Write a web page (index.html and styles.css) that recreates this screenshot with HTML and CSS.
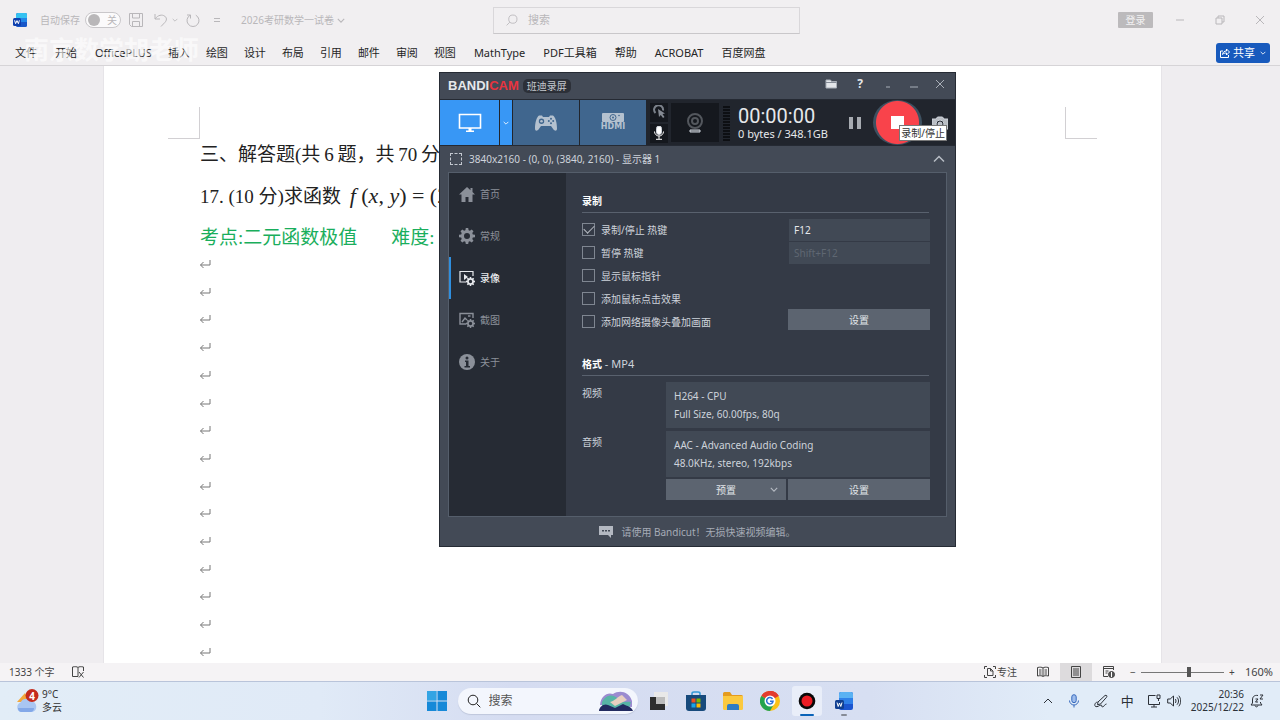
FILE: index.html
```html
<!DOCTYPE html>
<html lang="zh-CN">
<head>
<meta charset="utf-8">
<title>2026考研数学一试卷</title>
<link rel="stylesheet" href="styles.css">
</head>
<body>
<svg class="defs" aria-hidden="true">
  <symbol id="ret" viewBox="0 0 12 10"><path d="M11 1v5H1.500M4.500 3 1.500 6l3 3" fill="none" stroke="#777" stroke-width="1"/></symbol>
  <symbol id="gear" viewBox="0 0 16 16"><path fill="currentColor" fill-rule="evenodd" d="M6.800 0h2.400l.4 2.200 1.300.5L12.700 1.500l1.800 1.800-1.200 1.800.5 1.300 2.200.4v2.400l-2.200.4-.5 1.300 1.200 1.800-1.800 1.800-1.800-1.200-1.300.5L9.200 16H6.800l-.4-2.200-1.300-.5-1.800 1.200-1.800-1.800 1.200-1.800-.5-1.300L0 9.200V6.800l2.200-.4.5-1.300L1.500 3.300l1.800-1.800 1.800 1.200 1.300-.5zM8 5a3 3 0 1 0 0 6 3 3 0 0 0 0-6z"/></symbol>
  <symbol id="down" viewBox="0 0 10 6"><path d="M1 1l4 4 4-4" fill="none" stroke="currentColor" stroke-width="1.400"/></symbol>
  <symbol id="lens" viewBox="0 0 14 14"><circle cx="6" cy="6" r="4.800"/><path d="M9.500 9.500 13.300 13.300"/></symbol>
</svg>
<div class="screen">
  <header class="titlebar">
    <div class="title-left">
      <svg class="i14" viewBox="0 0 14 14"><rect x="3" width="11" height="14" rx="1.500" fill="#1857c8"/><path d="M4.500 0h8A1.500 1.500 0 0 1 14 1.500V5H3V1.500z" fill="#35c2f1"/><path d="M3 5h11v4H3z" fill="#2387e8"/><rect y="5" width="8" height="8" rx="1.500" fill="#0e3fae"/><path d="M1.600 7.300l1 3.400L4 7.600l1.400 3.100 1-3.400" fill="none" stroke="#fff"/></svg>
      <label class="autosave">自动保存<input type="checkbox" class="switch-input"><span class="switch"><span class="knob"></span>关</span></label>
      <button class="plain save" aria-label="保存"><svg class="i14" viewBox="0 0 14 14"><path d="M1 .5h12.500v13H2.500L.5 11.500V.500zM3.500.5v4.500h7V.5M3.500 13.500V8.500h7v5"/></svg></button>
      <button class="plain undo" aria-label="撤消"><svg class="i14" viewBox="0 0 14 14"><path d="M1 1v5h5M1.200 5.800C4 2 8 1.200 10.800 3.200c3 2.400 1.200 5.300-.5 6.800L7 13.500"/></svg><svg class="caret" viewBox="0 0 10 6"><use href="#down"/></svg></button>
      <button class="plain redo" aria-label="重复"><svg class="i14" viewBox="0 0 14 14"><path d="M4.200 2.200A6 6 0 1 0 9.800 2.200M1 2h3.500v3.500"/></svg></button>
      <button class="plain more" aria-label="自定义"><svg class="i8" viewBox="0 0 8 8"><path d="M1 2.500h6M1 5.500h6"/></svg></button>
      <span class="doc-name">2026考研数学一试卷</span><svg class="name-caret" viewBox="0 0 10 6"><use href="#down"/></svg>
    </div>
    <label class="search"><svg class="i12" viewBox="0 0 14 14"><g transform="matrix(-1 0 0 1 14 0)"><use href="#lens"/></g></svg><input type="text" placeholder="搜索"></label>
    <div class="title-right">
      <button class="login">登录</button>
      <button class="plain" aria-label="最小化"><svg class="i10" viewBox="0 0 10 10"><path d="M1 5h8"/></svg></button>
      <button class="plain" aria-label="还原"><svg class="i10" viewBox="0 0 10 10"><path d="M1 3h6v6H1zM3 3V1h6v6H7"/></svg></button>
      <button class="plain" aria-label="关闭"><svg class="i10" viewBox="0 0 10 10"><path d="M1 1l8 8M9 1 1 9"/></svg></button>
    </div>
  </header>
  <nav class="tabs">
    <button class="file">文件</button><button class="home">开始</button><button>OfficePLUS</button><button>插入</button><button>绘图</button><button>设计</button><button>布局</button><button>引用</button><button>邮件</button><button>审阅</button><button>视图</button>
    <div class="addins"><button>MathType</button><button>PDF工具箱</button><button>帮助</button><button>ACROBAT</button><button>百度网盘</button></div>
    <button class="share"><svg class="i10" viewBox="0 0 10 10"><path d="M3 3H.5v6.500h8V7M2.500 6.500c.3-2.500 2-3.500 4-3.500V1l3 3-3 3V5c-1.800 0-3 .3-4 1.500z"/></svg>共享<svg class="caret" viewBox="0 0 10 6"><use href="#down"/></svg></button>
    <div class="watermark">南京数学胡老师</div>
  </nav>

  <main class="canvas">
    <article class="page">
      <div class="corners"><span class="corner left"></span><span class="corner right"></span></div>
      <h2 class="line heading">三、解答题(共&thinsp;6&thinsp;题，共&thinsp;70&thinsp;分)</h2>
      <p class="line question">17. (10 分)求函数 <span class="math"><i>f</i> (<i>x</i>, <i>y</i>) = (2<i>x</i></span></p>
      <p class="line hint"><span>考点:二元函数极值</span><span>难度:</span></p>
      <div class="marks">
        <svg><use href="#ret"/></svg><svg><use href="#ret"/></svg><svg><use href="#ret"/></svg><svg><use href="#ret"/></svg><svg><use href="#ret"/></svg><svg><use href="#ret"/></svg><svg><use href="#ret"/></svg><svg><use href="#ret"/></svg><svg><use href="#ret"/></svg><svg><use href="#ret"/></svg><svg><use href="#ret"/></svg><svg><use href="#ret"/></svg><svg><use href="#ret"/></svg><svg><use href="#ret"/></svg><svg><use href="#ret"/></svg>
      </div>
    </article>
  </main>

  <footer class="status">
    <span>1333 个字</span>
    <button class="plain proof" aria-label="校对"><svg class="i12" viewBox="0 0 12 12"><path d="M6 10.500H.5V1C3 .5 5 .5 6 1.500 7 .5 9 .5 11.500 1v4M6 1.500v9M7 6l4.500 5.500M11.500 6 7 11.500"/></svg></button>
    <button class="plain focus"><svg class="i12" viewBox="0 0 12 12"><path d="M3 .5H.5V3M9 .5h2.500V3M3 11.500H.5V9M9 11.500h2.500V9M3.500 2.500h3l2.500 2.500v4.500H3.500zM6.500 2.500V5H9"/></svg>专注</button>
    <button class="plain view" aria-label="阅读视图"><svg class="i12" viewBox="0 0 12 12"><path d="M.5 1.500C3 1 5 1 6 2c1-1 3-1 5.500-.5V10C9 9.500 7 9.500 6 10.500 5 9.500 3 9.500.500 10zM6 2v8.500M2 4h2.500M2 6h2.500M2 8h2.500M7.500 4H10M7.500 6H10M7.500 8H10"/></svg></button>
    <button class="plain view active" aria-label="页面视图"><svg class="i12" viewBox="0 0 12 12"><path d="M1.500.5h9v11h-9zM3 3h6M3 5h6M3 7h6M3 9h6"/></svg></button>
    <button class="plain view" aria-label="Web 版式"><svg class="i12" viewBox="0 0 12 12"><path d="M5 10.500H.5V.500h10V4M.5 2.500h10M2.500 5h3M2.500 7h2"/><circle cx="8.500" cy="8.500" r="3" fill="#555"/><path d="M8.500 6v5" stroke="#fff"/></svg></button>
    <button class="plain zoom-out" aria-label="缩小">−</button>
    <input class="zoom" type="range" min="10" max="270" value="160" aria-label="缩放">
    <button class="plain zoom-in" aria-label="放大">+</button>
    <span class="percent">160%</span>
  </footer>

  <div class="taskbar">
    <div class="weather">
      <svg viewBox="0 0 24 26"><path d="M2 14 10 5l5 9z" fill="#f3a83b"/><path d="M6 24a5 5 0 0 1-.5-9.500 6 6 0 0 1 10.500-1A5.300 5.300 0 0 1 17 24z" fill="#a9c6f2"/><path d="M4 20h15a4 4 0 0 1-3 4H6a4 4 0 0 1-3-4z" fill="#83a8e8"/><circle cx="17" cy="7.500" r="6.500" fill="#c42b1c"/><text x="17" y="11.500" text-anchor="middle" class="badge-num">4</text></svg>
      <div>9°C<br>多云</div>
    </div>
    <div class="dock">
      <button class="plain" aria-label="开始"><svg class="i20" viewBox="0 0 20 20"><path fill="#1689d8" d="M0 0h9.500v9.500H0zM10.500 0H20v9.500h-9.500zM0 10.500h9.500V20H0zM10.500 10.500H20V20h-9.500z"/><path fill="#4fc0f0" opacity=".5" d="M0 0h9.500v9.500H0z"/></svg></button>
      <label class="task-search"><svg class="i14" viewBox="0 0 14 14"><use href="#lens"/></svg><input type="text" placeholder="搜索">
        <svg class="scene" viewBox="0 0 36 20"><path d="M2 14C3 5 9 1 15 3c6-4 16-3 19 7v6z" fill="#9b8bd0"/><path d="M4 11c4-8 12-8 16-3s8 2 13 3l-2 6H4z" fill="#57b4a6"/><path d="M12 11c5-1 7-5 12-7l5 5-12 6z" fill="#e8cfc0"/><path d="M1 20c0-4 5-8 9-6l7 3 8-4c4 2 9 3 10 7z" fill="#222b60"/></svg></label>
      <button class="plain" aria-label="任务视图"><svg class="i20" viewBox="0 0 20 20"><rect x="5" y="1" width="14" height="14" fill="#e9e9e9"/><path d="M1 6h6v7h9v6H1z" fill="#2e2e2e"/><path d="M7 6h9v7H7z" fill="#bcbcbc"/></svg></button>
      <button class="plain" aria-label="应用商店"><svg class="i20" viewBox="0 0 20 20"><path d="M6 5V2.500C6 1 7 1 8 1h4c1 0 2 0 2 1.500V5" fill="none" stroke="#3399d8" stroke-width="1.500"/><path d="M0 4h20v13a3 3 0 0 1-3 3H3a3 3 0 0 1-3-3z" fill="#174a7c"/><path d="M5.500 7.500h4v4h-4z" fill="#f05022"/><path d="M10.500 7.500h4v4h-4z" fill="#7fba00"/><path d="M5.500 12.500h4v4h-4z" fill="#19a3ea"/><path d="M10.500 12.500h4v4h-4z" fill="#ffb900"/></svg></button>
      <button class="plain" aria-label="文件资源管理器"><svg class="i20" viewBox="0 0 20 20"><path d="M0 2.500a1.500 1.500 0 0 1 1.500-1.500H7l2 3h9.500A1.500 1.500 0 0 1 20 5.500V10H0z" fill="#e49b1f"/><path d="M0 5h20v12.500a1.500 1.500 0 0 1-1.500 1.500h-17A1.500 1.500 0 0 1 0 17.500z" fill="#fbc93f"/><path d="M4 19v-4a2 2 0 0 1 2-2h8a2 2 0 0 1 2 2v4z" fill="#2f7cc4"/></svg></button>
      <button class="plain" aria-label="浏览器"><svg class="i20" viewBox="0 0 20 20"><circle cx="10" cy="10" r="10" fill="#fbc116"/><path d="M10 10 1.300 5A10 10 0 0 1 18.700 5z" fill="#e33b2e"/><path d="M1.300 5A10 10 0 0 0 10 20l4.300-7.500L10 10z" fill="#24a350"/><path d="M10 5h8.700A10 10 0 0 0 10 0z" fill="#e33b2e"/><circle cx="10" cy="10" r="5.500" fill="#fff"/><path d="M12.500 8A3.200 3.200 0 1 0 13 10.300H10" fill="none" stroke="#2a6fd6" stroke-width="1.500"/></svg></button>
      <button class="plain running" aria-label="Bandicam"><svg class="i20" viewBox="0 0 20 20"><circle cx="10" cy="10" r="8.300" fill="#090909"/><circle cx="10" cy="10" r="5.500" fill="#ed1c24"/></svg></button>
      <button class="plain opened" aria-label="Word"><svg class="i20" viewBox="0 0 20 20"><rect x="5" y="1" width="14" height="18" rx="2" fill="#1b55d0"/><path d="M7 1h10a2 2 0 0 1 2 2v4H5V3a2 2 0 0 1 2-2z" fill="#5ab2f3"/><path d="M5 7h14v6H5z" fill="#2f80e8"/><rect x="1" y="9" width="9" height="9" rx="1.500" fill="#103f91"/><path d="M3 11.500l1.200 4L5.500 12l1.300 3.500 1.200-4" fill="none" stroke="#fff"/></svg></button>
    </div>
    <div class="tray">
      <button class="plain" aria-label="显示隐藏的图标"><svg class="i12" viewBox="0 0 12 12"><path d="M2 8l4-4 4 4"/></svg></button>
      <button class="plain mic" aria-label="麦克风"><svg class="i14" viewBox="0 0 14 14"><rect x="4.800" y=".7" width="4.400" height="8" rx="2.200" fill="#9fbdec"/><path d="M2.500 6.500a4.500 4.500 0 0 0 9 0M7 11v2.500"/></svg></button>
      <button class="plain" aria-label="手写笔"><svg class="i14" viewBox="0 0 14 14"><path d="M4 8l7-6.500c1.500-.8 2.500.5 1.500 1.800L6.500 10l-3 .7zM3.500 8C1 8.500 0 11 1.500 12.500c2 1 4-1.500 5.500-1.500s0 2 1.500 1.800c2 0 2-2.800 4-2.800"/></svg></button>
      <button class="plain ime">中</button>
      <button class="plain net" aria-label="网络"><svg class="i14" viewBox="0 0 14 14"><path d="M8.500 1.500h-7v9h11V8M7 10.500V13M4 13h6M10 1h3v3.500h-3zM11.500 4.500V7"/></svg></button>
      <button class="plain" aria-label="音量"><svg class="i14" viewBox="0 0 14 14"><path d="M.7 5h2.500L6.500 2v10L3.200 9H.700zM8.300 5c.9 1 .9 3 0 4M10 3.300c2 2 2 5.400 0 7.400M11.800 1.700c2.500 3 2.500 7.600 0 10.600"/></svg></button>
      <time>20:36<br>2025/12/22</time>
      <button class="plain" aria-label="通知"><svg class="i14" viewBox="0 0 14 14"><path d="M8 1.500C4 .8 2.500 3 2.500 6v3L1 11h11l-1.500-2V8M5 11.500c.5 1.800 2.500 1.800 3 0M5.500 5H8L5.500 8H8M10 1h3l-3 4h3"/></svg></button>
    </div>
  </div>

  <section class="recorder">
    <header class="rec-title">
      <span class="brand">BANDI<b>CAM</b></span><span class="brand-tag">班迪录屏</span>
      <button class="plain folder" aria-label="打开文件夹"><svg class="i12" viewBox="0 0 12 12"><path d="M1 2h4.500l1 1.500H11.500V10H1z" fill="#e3e6ea"/><path d="M1 4.500h10.500" stroke="#858c97"/></svg></button>
      <button class="plain help">?</button>
      <button class="plain" aria-label="缩小窗口"><svg class="i10" viewBox="0 0 10 10"><path d="M3 8h4"/></svg></button>
      <button class="plain" aria-label="最小化"><svg class="i10" viewBox="0 0 10 10"><path d="M1 8h8"/></svg></button>
      <button class="plain" aria-label="关闭"><svg class="i10" viewBox="0 0 10 10"><path d="M1 1l8 8M9 1 1 9"/></svg></button>
    </header>
    <div class="rec-tools">
      <button class="mode screen-mode" aria-label="屏幕录制"><svg viewBox="0 0 24 20"><path d="M1.500 1.500h21v13.500h-21z" fill="none" stroke="#fff" stroke-width="1.600"/><path d="M10.500 15h3v2.500H16V19H8v-1.500h2.500z" fill="#fff"/></svg></button>
      <button class="mode mode-caret" aria-label="选择区域"><svg class="caret" viewBox="0 0 10 6"><use href="#down"/></svg></button>
      <button class="mode" aria-label="游戏录制"><svg viewBox="0 0 24 20"><path fill="#b4c1cf" fill-rule="evenodd" d="M5 2.500h3l1 1.500h6l1-1.500h3C21.500 4 23 10 23 15.500c0 3-2.500 2.500-3.500 1L17 13H7l-2.500 3.500c-1 1.500-3.500 2-3.500-1C1 10 2.500 4 5 2.500zM7.500 5.500a2.700 2.700 0 1 0 0 5.400 2.700 2.700 0 0 0 0-5.400z"/><circle cx="7.500" cy="8.200" r="1.300" fill="#b4c1cf"/><g fill="#40668e"><circle cx="17" cy="5.800" r="1"/><circle cx="17" cy="10.300" r="1"/><circle cx="14.800" cy="8" r="1"/><circle cx="19.200" cy="8" r="1"/></g></svg></button>
      <button class="mode hdmi"><svg viewBox="0 0 22 9"><rect width="22" height="9" rx="1" fill="#b4c1cf"/><circle cx="11" cy="4.500" r="3" fill="none" stroke="#40668e"/><circle cx="11" cy="4.500" r="1" fill="#40668e"/><circle cx="17" cy="2.500" r=".8" fill="#40668e"/></svg><span>HDMI</span></button>
      <div class="inputs">
        <button class="plain" aria-label="鼠标效果"><svg class="i14" viewBox="0 0 14 14"><path class="ring" d="M3.500 8A4.500 4.500 0 1 1 11 5.500"/><path d="M6 4l1 8 1.800-2 2.200 3 1.500-1-2-3 2.500-.5z" fill="#858a93" stroke="none"/></svg></button>
        <button class="plain" aria-label="麦克风"><svg class="i14" viewBox="0 0 14 14"><rect x="4.500" y="0" width="5" height="8.500" rx="2.500" fill="#fff"/><path d="M2.500 5.500a4.500 4.500 0 0 0 9 0M7 10v3M4 13.300h6" stroke="#fff"/></svg></button>
      </div>
      <button class="plain webcam" aria-label="摄像头"><svg viewBox="0 0 18 22"><circle cx="9" cy="9" r="7" fill="none" stroke="#53575d" stroke-width="2"/><circle cx="9" cy="9" r="3" fill="none" stroke="#53575d" stroke-width="2"/><path d="M4 18h10v2H4z" fill="#53575d"/></svg></button>
      <span class="level"></span>
      <div class="timer"><strong>00:00:00</strong><span>0 bytes / 348.1GB</span></div>
      <button class="plain pause" aria-label="暂停"><svg class="i12" viewBox="0 0 12 12"><path d="M0 0h4v12H0zM8 0h4v12H8z"/></svg></button>
      <button class="record" aria-label="停止录制"><span></span></button>
      <button class="plain shot" aria-label="截图"><svg class="i16" viewBox="0 0 16 14"><path fill="#b9bdc3" fill-rule="evenodd" d="M0 3h4l1.500-2h5L12 3h4v10H0zM8 4a4 4 0 1 0 0 8 4 4 0 0 0 0-8z"/><circle cx="8" cy="8" r="2" fill="#b9bdc3"/></svg></button>
      <span class="tooltip" role="tooltip">录制/停止</span>
    </div>
    <div class="target"><span class="marquee"></span><span>3840x2160 - (0, 0), (3840, 2160) - 显示器 1</span><svg viewBox="0 0 12 8"><path d="M1 6.500 6 1.500l5 5" fill="none" stroke="#b7bcc4" stroke-width="1.500"/></svg></div>
    <div class="panel">
      <nav class="side">
        <a href="#"><svg class="i16" viewBox="0 0 16 16"><path fill="currentColor" d="M8 1 0 8.500h2.500V16h4v-5h3v5h4V8.500H16l-2.500-2.400V2h-2v2.200z"/></svg>首页</a>
        <a href="#"><svg class="i16"><use href="#gear"/></svg>常规</a>
        <a href="#" class="current"><svg class="i16" viewBox="0 0 16 16"><path d="M7 12H1V1.500h13V6" fill="none" stroke="currentColor" stroke-width="1.200"/><path d="M5 4l4 3-4 3z" fill="currentColor"/><svg x="7" y="7" width="9" height="9"><use href="#gear"/></svg></svg>录像</a>
        <a href="#"><svg class="i16" viewBox="0 0 16 16"><path d="M7 12H1V1.500h13V6M3 10l3-4 2 2M9 4h2.500" fill="none" stroke="currentColor" stroke-width="1.400"/><svg x="7" y="7" width="9" height="9"><use href="#gear"/></svg></svg>截图</a>
        <a href="#"><svg class="i16" viewBox="0 0 16 16"><circle cx="8" cy="8" r="8" fill="currentColor"/><circle cx="8" cy="4" r="1.500" fill="#262b34"/><path d="M6 6.500h3.500V12H11v1.500H5.500V12H7V8H6z" fill="#262b34"/></svg>关于</a>
      </nav>
      <div class="settings">
        <h3>录制</h3>
        <div class="options">
          <div class="checks">
            <label><input type="checkbox" checked>录制/停止 热键</label>
            <label><input type="checkbox">暂停 热键</label>
            <label><input type="checkbox">显示鼠标指针</label>
            <label><input type="checkbox">添加鼠标点击效果</label>
            <label><input type="checkbox">添加网络摄像头叠加画面</label>
          </div>
          <div class="keys">
            <input type="text" value="F12" aria-label="录制/停止 热键">
            <input type="text" value="Shift+F12" disabled aria-label="暂停 热键">
            <button class="btn">设置</button>
          </div>
        </div>
        <h3 class="format">格式<span> - MP4</span></h3>
        <dl>
          <dt>视频</dt><dd>H264 - CPU<br>Full Size, 60.00fps, 80q</dd>
          <dt>音频</dt><dd>AAC - Advanced Audio Coding<br>48.0KHz, stereo, 192kbps</dd>
        </dl>
        <div class="actions"><button class="btn preset"><span>预置</span><svg viewBox="0 0 10 6"><use href="#down"/></svg></button><button class="btn">设置</button></div>
      </div>
    </div>
    <footer class="promo"><svg class="i14" viewBox="0 0 14 14"><path d="M0 1h14v9h-2v3l-3-3H0z" fill="#b3b8c1"/><path d="M3 5h2v1.500H3zM6 5h2v1.500H6zM9 5h2v1.500H9z" fill="#434a56"/></svg>请使用 Bandicut！无损快速视频编辑。</footer>
  </section>
</div>
</body>
</html>
```
FILE: styles.css
```css
* { box-sizing: border-box; }
body { margin: 0; font: 11px/16px "Noto Sans", "Noto Sans CJK SC", sans-serif; color: #262626; }
button, input { font: inherit; color: inherit; margin: 0; padding: 0; border: 0; background: none; border-radius: 0; }
input { min-width: 0; outline: 0; }
svg { display: block; flex: none; }
.defs { position: absolute; width: 0; height: 0; }
.plain { display: flex; align-items: center; justify-content: center; flex: none; }
.plain svg, .share svg, .search svg, .task-search > svg:first-child { fill: none; stroke: currentColor; stroke-width: 1; }
.i8 { width: 8px; height: 8px; }
.i10 { width: 10px; height: 10px; }
.i12 { width: 12px; height: 12px; }
.i14 { width: 14px; height: 14px; }
.i16 { width: 16px; height: 16px; }
.i20 { width: 20px; height: 20px; }
.dock .plain svg { stroke: none; }
.caret { width: 6px; height: 4px; }
.screen { position: relative; display: flex; flex-direction: column; height: 100vh; overflow: hidden; background: #f1eff1; }

.titlebar { display: grid; grid-template-columns: 1fr minmax(100px, 307px) 1fr; align-items: center; height: 40px; padding-left: 13px; color: #b9b7ba; }
.title-left { display: flex; align-items: center; font-size: 10px; }
.autosave { display: flex; align-items: center; gap: 5px; margin-left: 13px; }
.switch-input { position: absolute; opacity: 0; }
.switch { display: flex; align-items: center; gap: 7px; width: 36px; height: 16px; padding: 0 2px; border: 1px solid #c9c7ca; border-radius: 8px; background: #fbfafb; }
.knob { width: 12px; height: 12px; border-radius: 50%; background: #b9b7b9; }
.save { margin-left: 8px; }
.undo { margin-left: 11px; gap: 4px; }
.redo { margin-left: 8px; }
.more { margin-left: 13px; }
.doc-name { margin-left: 20px; white-space: nowrap; }
.name-caret { width: 8px; height: 5px; margin-left: 3px; }
.search { display: flex; align-items: center; gap: 10px; height: 27px; padding: 0 12px; border: 1px solid #d9d7da; border-bottom-color: #c9c7ca; }
.search input { flex: 1; }
.search input::placeholder { color: #b9b7ba; opacity: 1; }
.title-right { display: flex; align-items: center; justify-content: flex-end; gap: 30px; padding-right: 15px; }
.login { width: 35px; height: 16px; margin-right: -8px; background: #bcbabc; color: #f3f2f3; font-size: 10px; line-height: 14px; border-radius: 1px; }

.tabs { position: relative; display: flex; align-items: center; gap: 16px; height: 26px; padding: 0 10px 0 15px; border-bottom: 1px solid #d6d4d7; white-space: nowrap; }
.file, .home { margin-right: 2px; }
.addins { display: flex; gap: 18px; margin-left: 2px; }
.share { display: flex; align-items: center; gap: 3px; height: 20px; margin-left: auto; padding: 0 4px; background: #185abd; color: #fff; border-radius: 3px; }
.share .caret { margin-left: 2px; }
.watermark { position: absolute; left: 24px; top: -9px; font-size: 25px; line-height: 36px; font-weight: 700; color: #fff; opacity: .6; pointer-events: none; }

.canvas { display: flex; flex: 1; min-height: 0; padding: 0 119px 0 104px; background: #efedf0; }
.page { display: flex; flex-direction: column; flex: 1; padding: 41px 64px 6px; background: #fff; box-shadow: 0 0 0 1px #e6e4e8; font-family: "Liberation Serif", "Noto Sans CJK SC", serif; color: #222; }
.corners { display: flex; justify-content: space-between; }
.corner { width: 32px; height: 32px; border-bottom: 1px solid #d2d0d3; }
.left { border-right: 1px solid #d2d0d3; }
.right { border-left: 1px solid #d2d0d3; }
.line { margin: 0 0 0 32px; font-size: 19px; font-weight: 400; line-height: 42px; height: 42px; white-space: nowrap; overflow: hidden; }
.heading { margin-top: -5px; }
.question { margin-top: -1px; }
.math { margin-left: 4px; font-size: 22px; }
.hint { display: flex; gap: 34px; height: 42px; color: #1aae5c; }
.marks { display: flex; flex-direction: column; justify-content: space-between; flex: 1; margin-left: 31px; }
.marks svg { width: 12px; height: 10px; }

.status { display: flex; align-items: center; height: 18px; padding: 0 7px 0 9px; background: #f5f3f5; color: #444; font-size: 10px; }
.proof { margin-left: 18px; }
.focus { gap: 1px; margin-left: auto; }
.view { width: 32px; height: 18px; margin-left: 1px; }
.focus + .view { margin-left: 10px; }
.view.active { background: #dddbdd; }
.zoom-out { width: 8px; margin-left: 4px; }
.zoom { appearance: none; width: 83px; height: 16px; margin: 0 4px; background: linear-gradient(#777, #777) center / 100% 1px no-repeat; }
.zoom::-webkit-slider-thumb { appearance: none; width: 4px; height: 10px; background: #555; }
.zoom-in { width: 8px; }
.percent { margin-left: 9px; font-size: 11px; }

.taskbar { display: grid; grid-template-columns: 1fr auto 1fr; align-items: center; height: 39px; border-top: 1px solid #b9c4da; background: linear-gradient(90deg, #e2edf7, #e0eaf7 25%, #d5dcf1 40%, #d7dff2 68%, #e1ecf8 82%); }
.weather { display: flex; align-items: center; gap: 3px; padding-left: 15px; font-size: 10px; line-height: 13px; color: #333; }
.weather svg { width: 24px; height: 26px; }
.badge-num { font-size: 10px; font-weight: 700; fill: #fff; }
.dock { display: flex; align-items: center; gap: 17px; }
.task-search { display: flex; align-items: center; gap: 8px; width: 180px; height: 26px; margin: 0 -6px; padding: 0 4px 0 9px; border-radius: 13px; background: #f3f6fd; box-shadow: 0 1px 1px #bfc7dc; font-size: 12px; color: #222; }
.task-search input { flex: 1; }
.task-search input::placeholder { color: #555; opacity: 1; }
.scene { width: 36px; height: 20px; }
.running, .opened { position: relative; height: 30px; }
.running { padding: 0 5px; margin: 0 -5px; background: #e9eef9; border-radius: 3px; }
.running::after, .opened::after { content: ""; position: absolute; bottom: 0; left: 50%; width: 14px; height: 2px; margin-left: -7px; border-radius: 1px; background: #0a63b8; }
.opened::after { width: 6px; margin-left: -3px; background: #868b96; }
.tray { display: flex; align-items: center; justify-content: flex-end; gap: 13px; padding-right: 16px; color: #2c3138; }
.mic { color: #3568bd; }
.ime { font-size: 13px; }
.net { margin-right: -7px; }
.tray time { margin-left: -3px; font-size: 10px; line-height: 13px; text-align: right; }
.tray time + button { margin-left: -7px; }

.recorder { position: absolute; left: 439px; top: 72px; width: 517px; border: 1px solid #262b34; background: #434a56; color: #ced3db; font-size: 10px; }
.rec-title { display: flex; align-items: center; gap: 16px; height: 26px; padding: 0 10px 0 8px; color: #a9afb8; }
.rec-title button { margin-bottom: 4px; }
.brand { font: 700 13px/16px "Liberation Sans", Arial, sans-serif; color: #e6e8eb; }
.brand b { color: #e9343f; }
.brand-tag { margin-left: -12px; padding: 0 4px; border-radius: 5px; background: #2c3038; line-height: 14px; color: #c3c7cd; }
.folder { margin-left: auto; }
.help { width: 14px; font-weight: 700; font-size: 12px; color: #e3e6ea; }
.rec-tools { position: relative; display: flex; align-items: center; height: 47px; border-top: 1px solid #252a33; border-bottom: 1px solid #252a33; background: #21252d; }
.mode { display: flex; flex-direction: column; align-items: center; justify-content: center; width: 66px; height: 45px; margin-right: 1px; background: #40668e; }
.mode svg { width: 24px; height: 20px; }
.screen-mode { width: 59px; background: #3897f5; }
.mode-caret { width: 12px; background: #3897f5; color: #fff; }
.mode .caret { width: 6px; height: 4px; }
.hdmi { gap: 0; font: 700 8px/10px "DejaVu Sans", sans-serif; color: #b4c1cf; }
.hdmi svg { width: 22px; height: 9px; }
.inputs { display: flex; flex-direction: column; gap: 2px; margin-left: 3px; }
.inputs button { width: 18px; height: 19px; background: #15181e; }
.ring { stroke: #7b818a; stroke-width: 2; }
.webcam { width: 48px; height: 39px; margin-left: 3px; background: #15181e; }
.webcam svg { width: 18px; height: 22px; }
.level { width: 7px; height: 36px; margin-left: 4px; background: repeating-linear-gradient(#21252d 0 1px, #0d0f13 1px 3px); }
.timer { display: flex; flex-direction: column; width: 104px; margin-left: 8px; padding-top: 2px; font-size: 11px; line-height: 15px; color: #e6e8eb; white-space: nowrap; }
.timer strong { font: 400 20px/20px Roboto, sans-serif; }
.pause { margin-left: 7px; }
.plain.pause svg { fill: #a7abb1; stroke: none; }
.record { display: flex; align-items: center; justify-content: center; width: 49px; height: 45px; margin-left: 12px; border-radius: 50%; background: radial-gradient(circle, #f9434b 21px, #3d5060 22px); }
.record span { width: 13px; height: 13px; background: #fff; }
.shot { margin-left: 10px; }
.tooltip { position: absolute; right: 8px; bottom: 4px; padding: 0 1px; border: 1px solid #777; background: #fff; color: #333; line-height: 14px; }
.target { display: flex; align-items: center; gap: 7px; height: 26px; padding: 0 10px 0 10px; font-size: 11px; font-family: "Open Sans", "Noto Sans CJK SC", sans-serif; font-size: 10px; font-family: "Noto Sans", "Noto Sans CJK SC", sans-serif; }
.marquee { width: 12px; height: 12px; border: 1px dashed #c3c8d0; }
.target svg { width: 12px; height: 8px; margin-left: auto; }
.panel { display: flex; margin: 0 8px; border: 1px solid #555e6b; background: #343a46; }
.side { width: 117px; background: #262b34; }
.side a { display: flex; align-items: center; gap: 5px; height: 42px; padding-left: 8px; border-left: 2px solid transparent; color: #8b9099; text-decoration: none; }
.side .current { border-color: #2f8fdf; color: #e8eaed; font-weight: 500; }
.settings { flex: 1; padding: 20px 17px 16px 16px; }
.settings h3 { margin: 0; height: 20px; border-bottom: 1px solid #59616e; font-size: 10px; line-height: 16px; color: #fff; }
.settings h3 span { font-size: 11px; font-weight: 400; color: #ced3db; }
.options { display: flex; justify-content: space-between; padding-top: 5px; }
.checks label { display: flex; align-items: center; gap: 6px; height: 23px; white-space: nowrap; }
.checks input { appearance: none; width: 13px; height: 13px; border: 1px solid #7f8691; }
.checks input:checked::after { content: ""; display: block; width: 9px; height: 5px; margin: 1px; border: solid #b5bac2; border-width: 0 0 1px 1px; transform: rotate(-45deg); }
.keys { display: flex; flex-direction: column; gap: 1px; width: 142px; margin-right: -1px; padding-top: 1px; }
.keys input { height: 22px; padding-left: 5px; background: #414955; color: #e6e8eb; border-left: 1px solid #343a46; }
.keys input:disabled { color: #5f6772; }
.btn { height: 21px; background: #5c6470; color: #e1e4e9; line-height: 20px; }
.keys .btn { margin-top: auto; margin-bottom: 3px; }
.settings .format { margin-top: 23px; }
dl { display: grid; grid-template-columns: 84px 1fr; gap: 3px 0; margin: 6px -1px 0 0; }
dt { padding-top: 3px; }
dd { margin: 0; height: 46px; padding: 5px 8px; background: #414955; line-height: 18px; }
.actions { display: grid; grid-template-columns: 120px 1fr; gap: 2px; margin: 2px -1px 0 84px; }
.preset { display: flex; align-items: center; padding: 0 8px; }
.preset span { flex: 1; padding-left: 8px; }
.preset svg { width: 8px; height: 5px; color: #b5bac2; }
.promo { display: flex; align-items: center; justify-content: center; gap: 8px; height: 29px; color: #a6acb6; }
```
